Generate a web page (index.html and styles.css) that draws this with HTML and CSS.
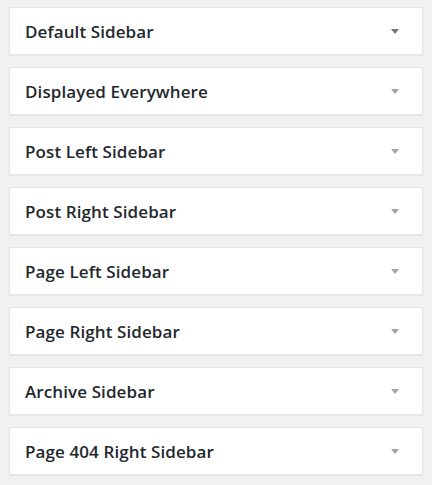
FILE: index.html
```html
<!DOCTYPE html>
<html>
<head>
<meta charset="utf-8">
<link rel="stylesheet" href="styles.css">
</head>
<body>
<div class="list">
  <div class="card"><span class="title">Default Sidebar</span><span class="arrow dark"></span></div>
  <div class="card"><span class="title">Displayed Everywhere</span><span class="arrow"></span></div>
  <div class="card"><span class="title">Post Left Sidebar</span><span class="arrow"></span></div>
  <div class="card"><span class="title">Post Right Sidebar</span><span class="arrow"></span></div>
  <div class="card"><span class="title">Page Left Sidebar</span><span class="arrow"></span></div>
  <div class="card"><span class="title">Page Right Sidebar</span><span class="arrow"></span></div>
  <div class="card"><span class="title">Archive Sidebar</span><span class="arrow"></span></div>
  <div class="card"><span class="title">Page 404 Right Sidebar</span><span class="arrow"></span></div>
</div>
</body>
</html>
```

FILE: styles.css
```css
html, body {
  margin: 0;
  padding: 0;
  background: #f1f1f1;
}
.list {
  padding: 7px 9px 10px 9px;
  display: flex;
  flex-direction: column;
  gap: 12px;
}
.card {
  box-sizing: border-box;
  height: 48px;
  background: #fff;
  border: 1px solid #e5e5e5;
  box-shadow: 0 1px 1px rgba(0,0,0,0.04);
  display: flex;
  align-items: center;
  justify-content: space-between;
  padding: 0 23px 0 15px;
}
.title {
  font-family: "Open Sans", sans-serif;
  font-weight: 550;
  font-size: 17px;
  letter-spacing: 0.1px;
  color: #23282d;
}
.arrow {
  width: 0;
  height: 0;
  border-left: 4px solid transparent;
  border-right: 4px solid transparent;
  border-top: 5px solid #a0a5aa;
  margin-top: 1px;
}
.arrow.dark {
  border-top-color: #72777c;
}
```
